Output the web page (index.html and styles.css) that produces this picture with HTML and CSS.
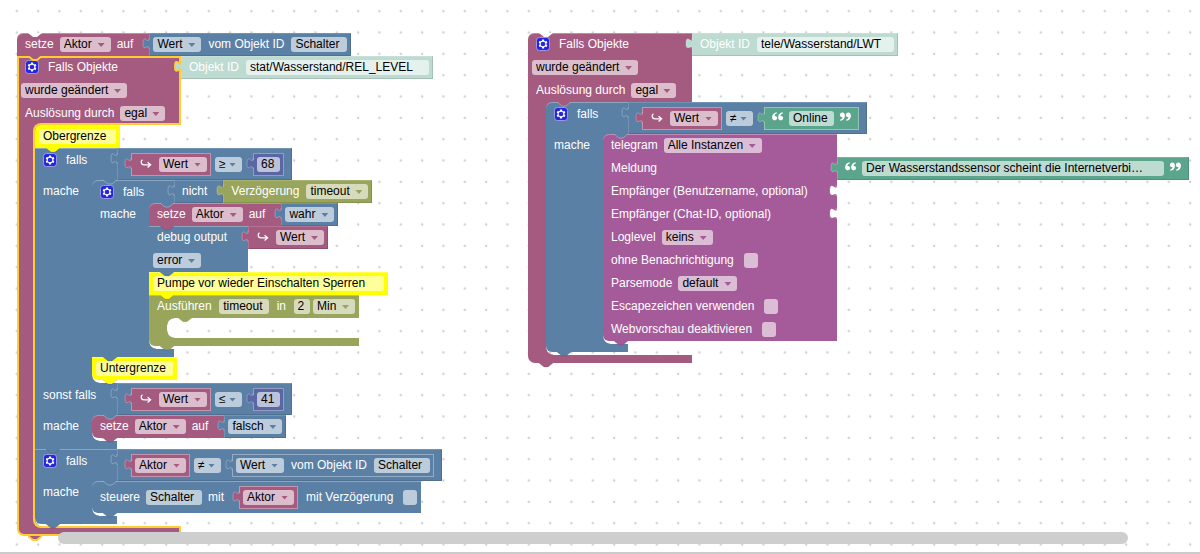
FILE: index.html
```html
<!DOCTYPE html>
<html lang="de">
<head>
<meta charset="utf-8">
<meta name="viewport" content="width=device-width, initial-scale=1">
<title>Wasserstand</title>
<link rel="stylesheet" href="styles.css">
</head>
<body>
<svg class="defs" aria-hidden="true">
  <symbol id="tab" viewBox="0 0 8 16"><path d="M8 0V4C8 12 1 -2 1 10C1 19 8 8 8 16Z" stroke="none"/><path d="M7 4C7 12 1 -2 1 10C1 19 7 8 7 15" fill="none"/></symbol>
  <symbol id="notch" viewBox="0 0 14 5"><path d="M0 0H14L9 4H5L0 0Z" stroke="none"/><path d="M0 0L5 4H9L14 0" fill="none"/></symbol>
  <symbol id="gear" viewBox="0 0 16 16"><rect x="0.5" y="0.5" width="15" height="15" rx="3.5" fill="#2626dc" stroke="#a9a9ee"/><path fill="#fff" d="m4.203,7.296 0,1.368 -0.92,0.677 -0.11,0.41 0.9,1.559 0.41,0.11 1.043,-0.457 1.187,0.683 0.127,1.134 0.3,0.3 1.8,0 0.3,-0.299 0.127,-1.138 1.185,-0.682 1.046,0.458 0.409,-0.11 0.9,-1.559 -0.11,-0.41 -0.92,-0.677 0,-1.366 0.92,-0.677 0.11,-0.41 -0.9,-1.559 -0.409,-0.109 -1.046,0.458 -1.185,-0.682 -0.127,-1.138 -0.3,-0.299 -1.8,0 -0.3,0.3 -0.126,1.135 -1.187,0.682 -1.043,-0.457 -0.41,0.11 -0.899,1.559 0.108,0.409z"/><circle cx="8" cy="8" r="2.7" fill="#2626dc"/></symbol>
  <symbol id="hook" viewBox="0 0 12 10"><path d="M2.5 0.8C0.4 2 0.8 5.8 4 5.8H10M7.6 3.2L10.6 5.8L7.6 8.4" fill="none" stroke="#fff" stroke-width="1.3"/></symbol>
  <symbol id="quote" viewBox="0 0 12 9"><path id="mark" fill="#fff" d="M4.6 0.2C1.4 0.8 0 3 0.1 5.6C0.2 7.4 1.2 8.4 2.7 8.4C4.1 8.4 5.1 7.4 5.1 6.1C5.1 4.8 4.2 3.9 3 3.9C2.8 3.9 2.6 3.9 2.5 4C2.7 2.6 3.5 1.7 5 1.2Z"/><use href="#mark" x="6"/></symbol>
</svg>

<main class="workspace">
  <svg class="grid" aria-hidden="true">
    <defs><pattern id="dots" x="6" y="0.5" width="21.333" height="21.333" patternUnits="userSpaceOnUse"><path d="M9.6 10.7H12M10.8 9.5V11.9" stroke="#c4c4c4"/></pattern></defs>
    <rect width="100%" height="100%" fill="url(#dots)"/>
  </svg>

  <section class="stack stack-level" aria-label="Wasserstand REL_LEVEL">
    <div class="block rose start">
      <svg class="notch cut"><use href="#notch"/></svg>
      <svg class="notch gold"><use href="#notch"/></svg>
      <div class="line">
        <div class="cell ext"><span class="label">setze</span><span class="drop"><select aria-label="Variable"><option>Aktor</option></select></span><span class="label">auf</span></div>
        <div class="value blue"><svg class="tab"><use href="#tab"/></svg><span class="drop"><select aria-label="Eigenschaft"><option>Wert</option></select></span><span class="label">vom Objekt ID</span><input class="field w-object" aria-label="Objekt ID" value="Schalter"></div>
      </div>
    </div>

    <div class="block rose selected">
      <svg class="notch gold"><use href="#notch"/></svg>
      <div class="line">
        <div class="cell event"><button class="gear" aria-label="Einstellungen"><svg><use href="#gear"/></svg></button><span class="label">Falls Objekte</span></div>
        <div class="value pale"><svg class="tab"><use href="#tab"/></svg><label class="label" for="oid1">Objekt ID</label><input id="oid1" class="field w-state" value="stat/Wasserstand/REL_LEVEL"></div>
      </div>
      <div class="line"><div class="cell event"><span class="drop"><select aria-label="Bedingung"><option>wurde geändert</option></select></span></div></div>
      <div class="line"><div class="cell event"><label class="label" for="src1">Auslösung durch</label><span class="drop"><select id="src1"><option>egal</option></select></span></div></div>
      <div class="body">
        <div class="spine"></div>
        <div class="slot">
          <div class="block yellow">
            <svg class="notch"><use href="#notch"/></svg>
            <div class="line"><div class="cell"><input class="field w-comment" aria-label="Kommentar" value="Obergrenze"></div></div>
          </div>

          <div class="block blue">
            <svg class="notch"><use href="#notch"/></svg>
            <div class="line">
              <div class="cell if"><button class="gear" aria-label="Einstellungen"><svg><use href="#gear"/></svg></button><span class="label">falls</span></div>
              <div class="value blue compare"><svg class="tab"><use href="#tab"/></svg>
                <div class="value rose inline"><svg class="tab"><use href="#tab"/></svg><svg class="hook"><use href="#hook"/></svg><span class="drop"><select aria-label="Auslöser"><option>Wert</option></select></span></div>
                <span class="drop op"><select aria-label="Vergleich"><option>≥</option></select></span>
                <div class="value indigo inline"><svg class="tab"><use href="#tab"/></svg><input class="field w-number" aria-label="Zahl" value="68"></div>
              </div>
            </div>
            <div class="body">
              <div class="spine wide"><span class="label">mache</span></div>
              <div class="slot">
                <svg class="notch top"><use href="#notch"/></svg>
                <div class="block blue">
                  <svg class="notch"><use href="#notch"/></svg>
                  <div class="line">
                    <div class="cell if"><button class="gear" aria-label="Einstellungen"><svg><use href="#gear"/></svg></button><span class="label">falls</span></div>
                    <div class="value blue ext"><svg class="tab"><use href="#tab"/></svg><span class="label">nicht</span></div>
                    <div class="value olive"><svg class="tab"><use href="#tab"/></svg><label class="label" for="timer">Verzögerung</label><span class="drop"><select id="timer"><option>timeout</option></select></span></div>
                  </div>
                  <div class="body">
                    <div class="spine wide"><span class="label">mache</span></div>
                    <div class="slot">
                      <svg class="notch top"><use href="#notch"/></svg>
                      <div class="block rose">
                        <svg class="notch"><use href="#notch"/></svg>
                        <div class="line">
                          <div class="cell ext"><span class="label">setze</span><span class="drop"><select aria-label="Variable"><option>Aktor</option></select></span><span class="label">auf</span></div>
                          <div class="value blue"><svg class="tab"><use href="#tab"/></svg><span class="drop"><select aria-label="Wahrheitswert"><option>wahr</option></select></span></div>
                        </div>
                      </div>
                      <div class="block blue">
                        <svg class="notch"><use href="#notch"/></svg>
                        <div class="line">
                          <div class="cell debug"><label class="label" for="sev">debug output</label></div>
                          <div class="value rose"><svg class="tab"><use href="#tab"/></svg><svg class="hook"><use href="#hook"/></svg><span class="drop"><select aria-label="Auslöser"><option>Wert</option></select></span></div>
                        </div>
                        <div class="line"><div class="cell debug"><span class="drop"><select id="sev"><option>error</option></select></span></div></div>
                      </div>
                      <div class="block yellow">
                        <svg class="notch"><use href="#notch"/></svg>
                        <div class="line"><div class="cell"><input class="field w-note" aria-label="Kommentar" value="Pumpe vor wieder Einschalten Sperren"></div></div>
                      </div>
                      <div class="block olive">
                        <svg class="notch"><use href="#notch"/></svg>
                        <div class="line"><div class="cell run"><span class="label">Ausführen</span><input class="field w-timer" aria-label="Name" value="timeout"><span class="label">in</span><input class="field w-digit" aria-label="Dauer" value="2"><span class="drop"><select aria-label="Einheit"><option>Min</option></select></span></div></div>
                        <div class="body"><div class="spine"></div><div class="slot empty"><svg class="notch top"><use href="#notch"/></svg></div></div>
                        <div class="foot long"></div>
                      </div>
                    </div>
                  </div>
                  <div class="foot short"></div>
                </div>
                <div class="block yellow">
                  <svg class="notch"><use href="#notch"/></svg>
                  <div class="line"><div class="cell"><input class="field w-comment" aria-label="Kommentar" value="Untergrenze"></div></div>
                </div>
              </div>
            </div>
            <div class="line">
              <div class="cell if"><span class="label">sonst falls</span></div>
              <div class="value blue compare"><svg class="tab"><use href="#tab"/></svg>
                <div class="value rose inline"><svg class="tab"><use href="#tab"/></svg><svg class="hook"><use href="#hook"/></svg><span class="drop"><select aria-label="Auslöser"><option>Wert</option></select></span></div>
                <span class="drop op"><select aria-label="Vergleich"><option>≤</option></select></span>
                <div class="value indigo inline"><svg class="tab"><use href="#tab"/></svg><input class="field w-number" aria-label="Zahl" value="41"></div>
              </div>
            </div>
            <div class="body">
              <div class="spine wide"><span class="label">mache</span></div>
              <div class="slot">
                <svg class="notch top"><use href="#notch"/></svg>
                <div class="block rose">
                  <svg class="notch"><use href="#notch"/></svg>
                  <div class="line">
                    <div class="cell ext"><span class="label">setze</span><span class="drop"><select aria-label="Variable"><option>Aktor</option></select></span><span class="label">auf</span></div>
                    <div class="value blue"><svg class="tab"><use href="#tab"/></svg><span class="drop"><select aria-label="Wahrheitswert"><option>falsch</option></select></span></div>
                  </div>
                </div>
              </div>
            </div>
            <div class="foot short"></div>
          </div>

          <div class="block blue">
            <svg class="notch"><use href="#notch"/></svg>
            <div class="line">
              <div class="cell if"><button class="gear" aria-label="Einstellungen"><svg><use href="#gear"/></svg></button><span class="label">falls</span></div>
              <div class="value blue compare"><svg class="tab"><use href="#tab"/></svg>
                <div class="value rose inline"><svg class="tab"><use href="#tab"/></svg><span class="drop"><select aria-label="Variable"><option>Aktor</option></select></span></div>
                <span class="drop op"><select aria-label="Vergleich"><option>≠</option></select></span>
                <div class="value blue inline"><svg class="tab"><use href="#tab"/></svg><span class="drop"><select aria-label="Eigenschaft"><option>Wert</option></select></span><span class="label">vom Objekt ID</span><input class="field w-object" aria-label="Objekt ID" value="Schalter"></div>
              </div>
            </div>
            <div class="body">
              <div class="spine wide"><span class="label">mache</span></div>
              <div class="slot">
                <svg class="notch top"><use href="#notch"/></svg>
                <div class="block blue">
                  <svg class="notch"><use href="#notch"/></svg>
                  <div class="line">
                    <div class="cell control"><label class="label" for="target">steuere</label><input id="target" class="field w-object" value="Schalter"><span class="label">mit</span>
                      <div class="value rose inline"><svg class="tab"><use href="#tab"/></svg><span class="drop"><select aria-label="Variable"><option>Aktor</option></select></span></div>
                      <label class="label" for="delay">mit Verzögerung</label><input type="checkbox" id="delay" class="check">
                    </div>
                  </div>
                </div>
              </div>
            </div>
            <div class="foot short"></div>
          </div>
        </div>
      </div>
      <div class="foot event"></div>
    </div>
  </section>

  <section class="stack stack-status" aria-label="Wasserstand LWT">
    <div class="block rose start">
      <svg class="notch cut"><use href="#notch"/></svg>
      <svg class="notch"><use href="#notch"/></svg>
      <div class="line">
        <div class="cell event"><button class="gear" aria-label="Einstellungen"><svg><use href="#gear"/></svg></button><span class="label">Falls Objekte</span></div>
        <div class="value pale"><svg class="tab"><use href="#tab"/></svg><label class="label" for="oid2">Objekt ID</label><input id="oid2" class="field w-topic" value="tele/Wasserstand/LWT"></div>
      </div>
      <div class="line"><div class="cell event"><span class="drop"><select aria-label="Bedingung"><option>wurde geändert</option></select></span></div></div>
      <div class="line"><div class="cell event"><label class="label" for="src2">Auslösung durch</label><span class="drop"><select id="src2"><option>egal</option></select></span></div></div>
      <div class="body">
        <div class="spine"></div>
        <div class="slot">
          <svg class="notch top"><use href="#notch"/></svg>
          <div class="block blue">
            <svg class="notch"><use href="#notch"/></svg>
            <div class="line">
              <div class="cell if"><button class="gear" aria-label="Einstellungen"><svg><use href="#gear"/></svg></button><span class="label">falls</span></div>
              <div class="value blue compare"><svg class="tab"><use href="#tab"/></svg>
                <div class="value rose inline"><svg class="tab"><use href="#tab"/></svg><svg class="hook"><use href="#hook"/></svg><span class="drop"><select aria-label="Auslöser"><option>Wert</option></select></span></div>
                <span class="drop op"><select aria-label="Vergleich"><option>≠</option></select></span>
                <div class="value green inline"><svg class="tab"><use href="#tab"/></svg><svg class="quote"><use href="#quote"/></svg><input class="field w-word" aria-label="Text" value="Online"><svg class="quote close"><use href="#quote"/></svg></div>
              </div>
            </div>
            <div class="body">
              <div class="spine wide"><span class="label">mache</span></div>
              <div class="slot">
                <svg class="notch top"><use href="#notch"/></svg>
                <div class="block violet">
                  <svg class="notch"><use href="#notch"/></svg>
                  <div class="line"><div class="cell message"><label class="label" for="inst">telegram</label><span class="drop"><select id="inst"><option>Alle Instanzen</option></select></span></div></div>
                  <div class="line">
                    <div class="cell message"><label class="label" for="msg">Meldung</label></div>
                    <div class="value green"><svg class="tab"><use href="#tab"/></svg><svg class="quote"><use href="#quote"/></svg><input id="msg" class="field w-message" value="Der Wasserstandssensor scheint die Internetverbi…"><svg class="quote close"><use href="#quote"/></svg></div>
                  </div>
                  <div class="line"><div class="cell message"><span class="label">Empfänger (Benutzername, optional)</span><svg class="socket"><use href="#tab"/></svg></div></div>
                  <div class="line"><div class="cell message"><span class="label">Empfänger (Chat-ID, optional)</span><svg class="socket"><use href="#tab"/></svg></div></div>
                  <div class="line"><div class="cell message"><label class="label" for="log">Loglevel</label><span class="drop"><select id="log"><option>keins</option></select></span></div></div>
                  <div class="line"><div class="cell message"><label class="label" for="silent">ohne Benachrichtigung</label><input type="checkbox" id="silent" class="check"></div></div>
                  <div class="line"><div class="cell message"><label class="label" for="parse">Parsemode</label><span class="drop"><select id="parse"><option>default</option></select></span></div></div>
                  <div class="line"><div class="cell message"><label class="label" for="escape">Escapezeichen verwenden</label><input type="checkbox" id="escape" class="check"></div></div>
                  <div class="line"><div class="cell message"><label class="label" for="preview">Webvorschau deaktivieren</label><input type="checkbox" id="preview" class="check"></div></div>
                </div>
              </div>
            </div>
            <div class="foot short"></div>
          </div>
        </div>
      </div>
      <div class="foot event"></div>
    </div>
  </section>

  <div class="scrollbar"></div>
</main>
</body>
</html>
```

FILE: styles.css
```css
*, *::before, *::after { box-sizing: border-box; }

body {
  margin: 0;
  background: #fff;
  color: #fff;
  font: 12px/15px "Liberation Sans", Arial, sans-serif;
}

.defs { position: absolute; width: 0; height: 0; }

.workspace {
  position: relative;
  height: 100vh;
  overflow: hidden;
  border-bottom: 2px solid #cbcbcb;
}

.grid { position: absolute; inset: 0; width: 100%; height: 100%; }

/* Stacks sit freely on the canvas */
.stack { position: absolute; top: 33px; }
.stack-level { left: 17px; }
.stack-status { left: 528px; }

/* Block colours */
.rose { --c: #a55b80; }
.blue { --c: #5b80a5; }
.olive { --c: #99a55b; }
.green { --c: #5ba58c; }
.indigo { --c: #5b67a5; }
.violet { --c: #a55b99; }
.yellow { --c: #ffff00; }
.pale { --c: #bddbd1; }

.block { position: relative; width: max-content; }
.line, .body { display: flex; }

.cell, .value {
  display: flex;
  align-items: flex-start;
  gap: 2px;
  padding: 4px;
  background: var(--c);
}

.value {
  position: relative;
  gap: 3px;
  box-shadow: inset 1px 1px rgba(255, 255, 255, 0.15), inset -1px -1px rgba(0, 0, 0, 0.12);
}

.block > .line:first-of-type > .cell { box-shadow: inset 0 1px rgba(255, 255, 255, 0.3); }
.ext { padding-right: 12px; }
.cell.event { width: 164px; }
.cell.if { width: 82px; padding-top: 5px; padding-bottom: 3px; }
.cell.debug { width: 99px; }
.cell.run { width: 210px; justify-content: space-between; }
.cell.message { position: relative; width: 234px; }
.cell.control { align-items: center; height: 32px; }

.value.compare { align-items: center; height: 32px; padding: 0 6px 0 5px; gap: 2px; }
.value.inline { margin: 0 2px 0 9px; box-shadow: inset 0 0 0 1px rgba(255, 255, 255, 0.35); }

.spine { width: 18px; padding: 4px; background: var(--c); }
.spine.wide { width: 57px; }

.foot { height: 8px; background: var(--c); }
.foot.short { width: 82px; }
.foot.long { width: 210px; }
.foot.event { width: 164px; border-bottom-left-radius: 7px; }

.slot {
  position: relative;
  padding-bottom: 3px;
  background:
    linear-gradient(var(--c), var(--c)) 0 0 / 7px 7px no-repeat,
    radial-gradient(circle at 100% 0, transparent 6px, var(--c) 7px) 0 100% / 7px 7px no-repeat;
}

.slot.empty {
  width: 192px;
  height: 20px;
  background:
    radial-gradient(circle at 100% 100%, transparent 6px, var(--c) 7px) 0 0 / 7px 7px no-repeat,
    radial-gradient(circle at 100% 0, transparent 6px, var(--c) 7px) 0 100% / 7px 7px no-repeat;
}

.start > .line:first-of-type > .cell,
.slot > .block:first-of-type > .line:first-of-type > .cell { border-top-left-radius: 6px; }

.slot > .block:last-child > .foot:last-child,
.slot > .block:last-child > .line:last-child > .cell { border-bottom-left-radius: 6px; }

/* Connectors */
.notch {
  position: absolute;
  z-index: 2;
  left: 11px;
  bottom: -5px;
  width: 14px;
  height: 5px;
  fill: var(--c);
  stroke: rgba(0, 0, 0, 0.12);
}
.notch.top { top: 0; bottom: auto; stroke: rgba(255, 255, 255, 0.3); }
.notch.cut { top: 0; bottom: auto; fill: #fff; stroke: none; }
.notch.gold { stroke: #fc3; stroke-width: 2px; }

.tab, .socket {
  position: absolute;
  z-index: 2;
  top: 1px;
  width: 8px;
  height: 16px;
  fill: var(--c);
  stroke: rgba(255, 255, 255, 0.25);
}
.tab { left: -7px; }
.socket { right: 0; fill: #fff; }

/* Selected block outline */
.selected > .line > .cell {
  padding-left: 2px;
  border: 0 solid #fc3;
  border-width: 0 2px;
}
.selected > .line:first-of-type > .cell { box-shadow: inset 0 2px #fc3; }
.selected > .line > .pale > .tab { stroke: #fc3; stroke-width: 2px; }
.selected > .body > .spine { border-left: 2px solid #fc3; }
.selected > .body > .slot::before {
  content: "";
  position: absolute;
  z-index: 1;
  top: -2px;
  bottom: -1px;
  left: -2px;
  width: 148px;
  border: 2px solid #fc3;
  border-right: 0;
  border-radius: 8px 0 0 8px;
  pointer-events: none;
}
.selected > .foot { border: 2px solid #fc3; border-top: 0; height: 9px; }

/* Fields */
.label { margin: 0 4px; white-space: nowrap; }

.field, .drop select {
  height: 15px;
  margin: 0;
  border: 0;
  border-radius: 3px;
  background: rgba(255, 255, 255, 0.6);
  color: #000;
  font: inherit;
}

.field { padding: 0 4px; }
.drop { position: relative; display: flex; }
.drop select { appearance: none; padding: 0 18px 0 4px; }
.drop::after {
  content: "";
  position: absolute;
  right: 6px;
  top: 6px;
  width: 7px;
  height: 4px;
  background: var(--c);
  clip-path: polygon(0 0, 100% 0, 50% 100%);
  pointer-events: none;
}
.drop.op select { padding-right: 16px; }

.w-object { width: 56px; }
.w-state { width: 183px; }
.w-topic { width: 137px; }
.w-comment { width: 77px; }
.w-note { width: 231px; }
.w-timer { width: 50px; }
.w-digit { width: 16px; }
.w-number { width: 23px; }
.w-word { width: 45px; }
.w-message { width: 302px; }

.check {
  appearance: none;
  width: 14px;
  height: 15px;
  margin: 0 0 0 4px;
  border-radius: 3px;
  background: rgba(255, 255, 255, 0.6);
}

.gear {
  width: 14px;
  height: 14px;
  margin: 0 3px 0 4px;
  padding: 0;
  border: 0;
  background: none;
}
.gear svg { display: block; width: 14px; height: 14px; }
.hook { width: 12px; height: 10px; margin: 2px 4px 0 5px; }
.quote { width: 12px; height: 9px; margin: 1px 2px 0 4px; }
.quote.close { margin: 1px 4px 0 2px; transform: rotate(180deg); }

.scrollbar {
  position: absolute;
  z-index: 3;
  right: 72px;
  bottom: 8px;
  left: 58px;
  height: 12px;
  border-radius: 6px;
  background: #cecece;
}
```
